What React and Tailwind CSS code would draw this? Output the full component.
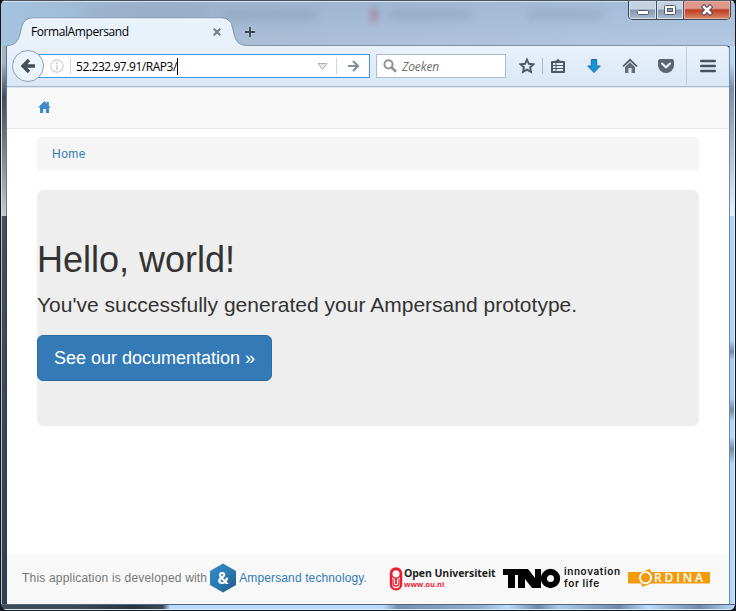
import React from "react";

const ui = "font-['Open_Sans','Noto_Sans',sans-serif]";

function CaptionButtons() {
  return (
    <div className="absolute right-[5px] top-0 flex h-5 w-[103px] overflow-hidden rounded-b-[5px] border border-[#3c4654] border-t-[#555e6b] bg-[#8b9cb0]">
      <div className="flex w-7 items-center justify-center border-r border-[#465262] bg-linear-to-b from-[#c5d2e2] from-45% via-[#8396ae] via-50% to-[#aec0d4] shadow-[inset_0_0_0_1px_#d3dfec]">
        <svg className="mt-[4px]" width="14" height="12" viewBox="0 0 14 12"><rect x="1.5" y="4.5" width="11" height="4" rx="1" fill="#fff" stroke="#555a6a" /></svg>
      </div>
      <div className="flex w-[27px] items-center justify-center border-r border-[#465262] bg-linear-to-b from-[#c5d2e2] from-45% via-[#8396ae] via-50% to-[#aec0d4] shadow-[inset_0_0_0_1px_#d3dfec]">
        <svg width="14" height="12" viewBox="0 0 14 12"><rect x="1.5" y="1.5" width="11" height="9" rx="1" fill="#fff" stroke="#555a6a" /><rect x="4.5" y="4.5" width="5" height="3" fill="#8b9cb0" stroke="#555a6a" /></svg>
      </div>
      <div className="flex flex-1 items-center justify-center bg-linear-to-b from-[#dd9a8c] from-40% via-[#be3a20] via-50% to-[#d98766] shadow-[inset_0_0_0_1px_#e8b0a0]">
        <svg width="14" height="12" viewBox="0 0 14 12"><path d="M4 3l6 6M10 3l-6 6" stroke="#555062" strokeWidth="4.6" strokeLinecap="square" /><path d="M4 3l6 6M10 3l-6 6" stroke="#fff" strokeWidth="2.6" strokeLinecap="square" /></svg>
      </div>
    </div>
  );
}

function TitleBar() {
  return (
    <header className="relative h-[46px] shrink-0 overflow-hidden bg-linear-to-b from-[#98b1cd] to-[#b1c2d7]">
      <div className="absolute inset-0 bg-linear-to-r from-[#a4c3de] via-[#9eb4ce]/40 via-20% to-[#b9d3ef]/40" />
      <div className="absolute left-[85px] top-[7px] h-3 w-[125px] bg-[#8191a7]/20 blur-[5px]" />
      <div className="absolute left-[222px] top-[11px] h-2 w-[94px] bg-[#7286a0]/30 blur-[4px]" />
      <div className="absolute left-[370px] top-[8px] h-[14px] w-2 bg-[#ac7794]/60 blur-[3px]" />
      <div className="absolute left-[389px] top-[11px] h-2 w-[82px] bg-[#7286a0]/30 blur-[4px]" />
      <div className="absolute left-[528px] top-[11px] h-2 w-[75px] bg-[#7286a0]/30 blur-[4px]" />
      <div className="absolute inset-x-0 top-0 h-[2px] border-b border-[#d4e3f1] bg-[#4b535f]" />
      <svg className="absolute inset-0" width="736" height="46" viewBox="0 0 736 46" fill="none">
        <path d="M7 46V45.5C16 45 18 41 20 34C22 25 23 18 33 18H221C231 18 232 25 234 34C236 41 238 45.5 248 45.5V46Z" fill="#e9f1fa" />
        <path d="M7 45.5C16 45 18 41 20 34C22 25 23 18 33 18H221C231 18 232 25 234 34C236 41 238 45.5 248 45.5H728" stroke="#7f92a9" />
        <path d="M24 24Q27 19 33 19H221Q229 19 231 25" stroke="#f7faff" />
      </svg>
      <div className="relative flex h-full items-start pl-[31px] pt-[18px]">
        <span className={`${ui} w-[181px] text-[12px] leading-[28px] tracking-[-0.42px] text-black`}>FormalAmpersand</span>
        <svg className="mt-[9px]" width="10" height="10" viewBox="0 0 10 10"><path d="M1.7 1.7l6.6 6.6M8.3 1.7L1.7 8.3" stroke="#717e8c" strokeWidth="2" /></svg>
        <svg className="ml-[22px] mt-[8px]" width="12" height="12" viewBox="0 0 12 12"><path d="M6 1v10M1 6h10" stroke="#f0f5fb" strokeOpacity=".4" strokeWidth="3" /><path d="M6 1v10M1 6h10" stroke="#384350" strokeWidth="1.8" /></svg>
      </div>
      <CaptionButtons />
    </header>
  );
}

function Toolbar() {
  return (
    <div className="flex h-[42px] shrink-0 items-start rounded-tr-[3px] border-b border-b-[#dfe5ec] bg-linear-to-b from-[#e9f1fa] to-[#d9e7f7] shadow-[inset_0_-1px_0_#a6bad1]">
      <svg className="relative z-10 ml-[4px] mt-[3px] shrink-0" width="34" height="34" viewBox="0 0 34 34" fill="none">
        <circle cx="17" cy="17" r="15.5" fill="#ecf3fb" stroke="#8c9fb4" />
        <path d="M12 17H24M18 11L12 17L18 23" stroke="#434e58" strokeWidth="3.4" />
      </svg>
      <div className="-ml-[8px] mt-[8px] flex h-6 w-[333px] shrink-0 items-center border border-[#3c96ee] bg-white pl-[12px]">
        <svg width="14" height="14" viewBox="0 0 14 14" fill="none"><circle cx="7" cy="7" r="6.2" stroke="#cfcfcf" strokeWidth="1.2" /><path d="M7 6v5M7 3v2" stroke="#cfcfcf" strokeWidth="1.5" /></svg>
        <div className="ml-[6px] h-4 w-px bg-[#d5d5d5]" />
        <span className={`${ui} ml-[5px] whitespace-nowrap pt-px text-[12px] leading-4 tracking-[-0.45px] text-black`}>52.232.97.91/RAP3/</span>
        <div className="h-[17px] w-px bg-black" />
        <div className="flex-1" />
        <svg width="11" height="9" viewBox="0 0 11 9"><path d="M1 1.5H10L5.5 7.5Z" fill="#e3e6ea" stroke="#afb2b6" /></svg>
        <div className="ml-[8px] h-4 w-px bg-[#d5d5d5]" />
        <svg className="ml-[11px] mr-[9px]" width="12" height="12" viewBox="0 0 12 12" fill="none"><path d="M0 6H10M5 1L10 6L5 11" stroke="#82909f" strokeWidth="2.2" /></svg>
      </div>
      <div className="ml-[6px] mt-[8px] flex h-6 w-[130px] shrink-0 items-center border border-[#abbdd2] bg-white pl-[6px]">
        <svg width="14" height="14" viewBox="0 0 14 14" fill="none"><circle cx="5.5" cy="5.3" r="4.1" stroke="#929292" strokeWidth="2" /><path d="M8.5 8.3L13 12.7" stroke="#929292" strokeWidth="2.6" /></svg>
        <span className={`${ui} ml-[5px] pt-px text-[12px] italic tracking-[-0.15px] text-[#6d6d6d]`}>Zoeken</span>
      </div>
      <div className="flex h-10 flex-1 items-center">
        <svg className="ml-[13px]" width="16" height="16" viewBox="0 0 16 16"><path d="M8 1.6L9.9 5.8L14.5 6.3L11.1 9.4L12 14L8 11.7L4 14L4.9 9.4L1.5 6.3L6.1 5.8Z" fill="none" stroke="#4c5864" strokeWidth="1.9" /></svg>
        <div className="ml-[7px] h-4 w-px bg-[#aebdcc]" />
        <svg className="ml-[7px]" width="16" height="16" viewBox="0 0 16 16" fill="none"><path d="M2 4H14V14H2Z" stroke="#4c5864" strokeWidth="2" strokeLinejoin="round" /><path d="M4.5 4.5V2.8H6L8 .8L10 2.8H11.5V4.5Z" fill="#4c5864" /><path d="M3 7.5H13M3 10.5H13" stroke="#4c5864" strokeWidth="1.1" /><path d="M6 5V13" stroke="#4c5864" /></svg>
        <svg className="ml-[20px]" width="16" height="16" viewBox="0 0 16 16"><path d="M5.3 1.5H10.7V8H14.3L8 14.5L1.7 8H5.3Z" fill="#1593d6" stroke="#1b6fa7" /></svg>
        <svg className="ml-[20px]" width="16" height="16" viewBox="0 0 16 16"><path d="M1 8.5L8 1.8L15 8.5" fill="none" stroke="#4c5864" strokeWidth="1.7" /><path d="M3 9L8 4.2L13 9V15H9.6V10H6.4V15H3Z" fill="#636e79" /></svg>
        <svg className="ml-[20px]" width="16" height="16" viewBox="0 0 16 16"><path d="M1.5 1H14.5L16 2.5V7A8 8 0 0 1 0 7V2.5Z" fill="#596571" /><path d="M4 5.5L8 9.3L12 5.5" fill="none" stroke="#eef4fb" strokeWidth="2.1" strokeLinecap="round" /></svg>
        <div className="ml-[12px] h-[38px] w-px bg-[#bfcddd]" />
        <svg className="ml-[13px]" width="16" height="14" viewBox="0 0 16 14"><path d="M1.3 2H14.7M1.3 7H14.7M1.3 12H14.7" stroke="#46525f" strokeWidth="2.6" strokeLinecap="round" /></svg>
      </div>
    </div>
  );
}

function HexLogo() {
  return (
    <svg className="mx-[3px] shrink-0" width="26" height="30" viewBox="0 0 26 30">
      <defs><linearGradient id="hex" x2="1" y2="1"><stop stopColor="#348ac6" /><stop offset=".5" stopColor="#2a7bb4" /><stop offset="1" stopColor="#1e5787" /></linearGradient></defs>
      <path d="M13 .5L26 8V22L13 29.5L0 22V8Z" fill="url(#hex)" />
      <text x="13" y="20.5" textAnchor="middle" fontFamily="Noto Sans, sans-serif" fontWeight="700" fontSize="15.5" fill="#fff" textLength="11" lengthAdjust="spacingAndGlyphs">&amp;</text>
    </svg>
  );
}

function PartnerLogos() {
  return (
    <div className="ml-[22px] flex h-[26px] shrink-0 items-start">
      <svg className="mt-[2px]" width="14" height="24" viewBox="0 0 14 24" fill="none" stroke="#ec1c2e">
        <rect x="1.9" y="1.4" width="10.2" height="21" rx="5.1" strokeWidth="2.2" />
        <circle cx="7" cy="6.8" r="4.4" strokeWidth="1.6" />
        <path d="M4 12V16Q4 19 7 19Q10 19 10 16V12" strokeWidth="1.3" />
        <path d="M7 12V17" strokeWidth="1.8" />
      </svg>
      <div className="ml-[1px] mt-[1px] flex w-[98px] flex-col font-['Open_Sans',sans-serif] font-bold">
        <span className="text-[10.5px] leading-[14px] tracking-[-0.07px] text-[#222]">Open Universiteit</span>
        <span className="text-[7.5px] leading-[8px] text-[#ec1c2e]">www.ou.nl</span>
      </div>
      <svg className="ml-[1px] mt-[3px]" width="58" height="21" viewBox="0 0 58 21">
        <path d="M0 1H25L32 10V1H38V20H29L22 11V20H15V7H12V20H5V7H0Z" fill="#000" />
        <circle cx="47.5" cy="10.5" r="6.6" fill="none" stroke="#000" strokeWidth="6.2" />
      </svg>
      <div className="ml-[3px] flex w-[64px] flex-col whitespace-nowrap font-[Inter,sans-serif] text-[10px] font-semibold leading-[12px] tracking-[0.6px] text-[#111]">
        <span>innovation</span>
        <span>for life</span>
      </div>
      <svg className="mt-[3px]" width="84" height="20" viewBox="0 0 84 20">
        <path d="M0 4H14L22 0.8L23 4H82V15.5H23L14 19L13.5 15.5H0Z" fill="#f29b0c" />
        <circle cx="17.5" cy="9.7" r="5.6" fill="none" stroke="#fff" strokeWidth="1.8" />
        <text x="26" y="14.2" fontFamily="Open Sans, sans-serif" fontWeight="600" fontSize="12" fill="#fff" textLength="49">RDINA</text>
      </svg>
    </div>
  );
}

function Page() {
  return (
    <div className="flex min-h-0 flex-1 flex-col bg-white font-['Liberation_Sans',Arial,sans-serif] text-[#333]">
      <nav className="h-[41px] shrink-0 border-b border-[#e7e7e7] bg-[#f8f8f8] pl-[31px] pt-[12px]">
        <svg width="13" height="14" viewBox="0 0 13 14"><path d="M6.5 1L0 7.6H2V13H5.2V9H7.8V13H11V7.6H13L10.8 5.4V1.8H9V3.5Z" fill="#428bca" /></svg>
      </nav>
      <main className="flex flex-1 flex-col px-[30px] pt-[8px]">
        <div className="h-[33px] rounded bg-[#f5f5f5] px-[15px] text-[12px] leading-[34px] tracking-[0.5px] text-[#337ab7]">Home</div>
        <section className="mt-5 h-[236px] rounded-[6px] bg-[#eee] pt-[50px]">
          <h1 className="text-[36px] leading-[40px]">Hello, world!</h1>
          <p className="mt-[10px] text-[21px] leading-[30px] tracking-[0.02px]">You've successfully generated your Ampersand prototype.</p>
          <a className="mt-[15px] flex h-[46px] w-[235px] items-center justify-center rounded-[6px] border border-[#2e6da4] bg-[#337ab7] text-[18px] text-white">See our documentation »</a>
        </section>
      </main>
      <footer className="flex h-[50px] shrink-0 items-center whitespace-nowrap bg-[#f8f8f8] pb-[2px] pl-[15px] text-[12px] text-[#777]">
        <span className="tracking-[0.19px]">This application is developed with</span>
        <HexLogo />
        <span className="tracking-[0.12px]"><span className="text-[#337ab7]">Ampersand technology</span>.</span>
        <PartnerLogos />
      </footer>
    </div>
  );
}

export default function App() {
  return (
    <div className="h-[611px] w-[736px] overflow-hidden bg-[#15171b]">
      <div className="flex h-[610px] w-[736px] flex-col overflow-hidden rounded-[6px] border-l border-r border-[#17191d]">
        <div className="-mx-px flex min-h-0 flex-1 flex-col">
          <TitleBar />
          <div className="flex min-h-0 flex-1">
            <div className="flex w-[7px] shrink-0 flex-col border-l border-black">
              <div className="h-[170px] border-l border-[#d8dee6] border-r border-r-[#657487] bg-linear-to-b from-[#a3b4c8] from-10% via-[#434d5a] via-30% to-[#c9cace]" />
              <div className="flex-1 border-l border-[#b8c1cc] border-r border-r-[#303c4b] bg-linear-to-b from-[#44505e] to-[#323f4e]" />
            </div>
            <div className="flex min-w-0 flex-1 flex-col">
              <Toolbar />
              <Page />
            </div>
            <div className="flex w-[7px] shrink-0 flex-col border-r border-black">
              <div className="h-[170px] border-l border-r border-l-[#6f8aa8] border-r-[#d8ecff] bg-linear-to-b from-[#b9d8f7] from-10% via-[#7c8ea4] via-25% to-[#e6f2ff]" />
              <div className="flex-1 border-l border-r border-l-[#6f8aa8] border-r-[#d8ecff] bg-[linear-gradient(#afd4fa_0_32%,#6f8ba8_35%,#a8ccef_37%,#a8ccef_47%,#6f8ba8_50%,#b4d7fb_53%,#b4d7fb_57%,#6f8ba8_60%,#b4d7fb_64%,#b4d7fb)]" />
            </div>
          </div>
          <div className="ml-px h-[6px] shrink-0 border-b border-t border-b-[#dceaf8] border-t-[#53667c] bg-[linear-gradient(90deg,#3c4b5a_0_10%,#28323e_18%,#3b4857_22%,#b8dbff_23%,#b8dbff_52%,#7491b0_54%,#90aecd_65%,#b8dbff_69%,#6f8aa8_73%,#a8cbed_76%,#6f8aa8_84%,#b8dbff_88%,#708aa7_95%,#b8dbff)]" />
        </div>
      </div>
    </div>
  );
}
